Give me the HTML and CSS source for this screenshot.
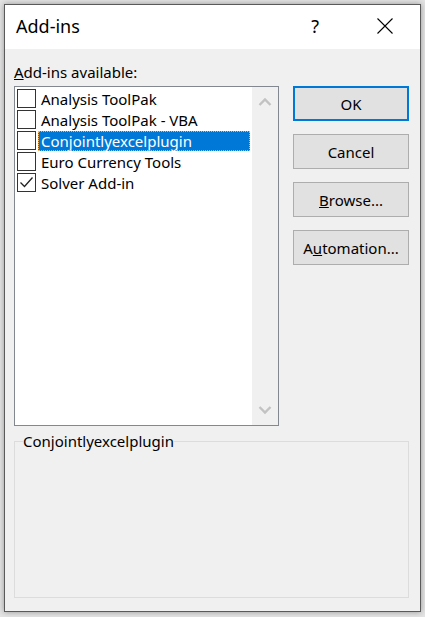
FILE: index.html
```html
<!DOCTYPE html>
<html>
<head>
<meta charset="utf-8">
<link rel="stylesheet" href="styles.css">
</head>
<body>
<div class="window">
  <div class="titlebar">
    <span class="title">Add-ins</span>
    <span class="help">?</span>
    <svg class="close" width="16" height="16" viewBox="0 0 16 16"><path d="M0.5 0.5 L15.5 15.5 M15.5 0.5 L0.5 15.5" stroke="#000" stroke-width="1.1" fill="none"/></svg>
  </div>
  <div class="content">
    <div class="main">
      <div class="left">
        <div class="label"><u>A</u>dd-ins available:</div>
        <div class="listbox">
          <div class="items">
            <div class="row"><span class="cb"></span><span class="txt">Analysis ToolPak</span></div>
            <div class="row"><span class="cb"></span><span class="txt">Analysis ToolPak - VBA</span></div>
            <div class="row"><span class="cb"></span><span class="txt sel">Conjointlyexcelplugin</span></div>
            <div class="row"><span class="cb"></span><span class="txt">Euro Currency Tools</span></div>
            <div class="row"><span class="cb"><svg width="17" height="17" viewBox="0 0 17 17"><path d="M2.5 8.5 L6.5 12.5 L14.5 3.5" stroke="#222" stroke-width="1.3" fill="none"/></svg></span><span class="txt">Solver Add-in</span></div>
          </div>
          <div class="scrollbar">
            <svg width="14" height="10" viewBox="0 0 14 10"><path d="M1.5 8 L7 2.5 L12.5 8" stroke="#c2c2c2" stroke-width="2.4" fill="none"/></svg>
            <svg width="14" height="10" viewBox="0 0 14 10"><path d="M1.5 2 L7 7.5 L12.5 2" stroke="#c2c2c2" stroke-width="2.4" fill="none"/></svg>
          </div>
        </div>
      </div>
      <div class="buttons">
        <button class="btn default">OK</button>
        <button class="btn">Cancel</button>
        <button class="btn"><u>B</u>rowse...</button>
        <button class="btn">A<u>u</u>tomation...</button>
      </div>
    </div>
    <fieldset class="group">
      <legend>Conjointlyexcelplugin</legend>
    </fieldset>
  </div>
</div>
</body>
</html>
```
FILE: styles.css
```css
html, body {
  margin: 0;
  padding: 0;
}
body {
  background: #e4e4e4;
  width: 425px;
  height: 617px;
  overflow: hidden;
  font-family: "Noto Sans", "Open Sans", sans-serif;
  font-size: 15px;
  color: #000;
}
.window {
  margin: 4px 0 0 4px;
  width: 415px;
  height: 606px;
  border: 1px solid #5a5a5a;
  background: #f0f0f0;
  box-shadow: 0 0 6px rgba(0,0,0,0.35);
  display: flex;
  flex-direction: column;
}
.titlebar {
  height: 44px;
  background: #fff;
  display: flex;
  align-items: center;
}
.title {
  margin-left: 11px;
  font-size: 18px;
  margin-top: -2px;
}
.help {
  margin-left: auto;
  font-size: 18px;
  margin-right: 58px;
  margin-top: -2px;
}
.close {
  margin-right: 27px;
  margin-top: -2px;
}
.content {
  flex: 1;
  padding: 0 11px 0 9px;
  display: flex;
  flex-direction: column;
}
.main {
  display: flex;
  gap: 14px;
}
.left {
  display: flex;
  flex-direction: column;
}
.label {
  height: 20px;
  line-height: 20px;
  margin-top: 13px;
  margin-bottom: 4px;
}
.listbox {
  width: 263px;
  height: 338px;
  border: 1px solid #828790;
  background: #fff;
  display: flex;
}
.items {
  flex: 1;
  padding-top: 1px;
}
.row {
  height: 21px;
  display: flex;
  align-items: center;
}
.cb {
  width: 19px;
  height: 19px;
  border: 1px solid #333;
  box-sizing: border-box;
  margin-left: 2px;
  margin-right: 2px;
  background: #fff;
  display: flex;
  align-items: center;
  justify-content: center;
}
.txt {
  padding: 0 3px;
  height: 20px;
  line-height: 20px;
  white-space: nowrap;
}
.txt.sel {
  background: #0078d7;
  color: #fff;
  width: 212px;
  box-sizing: border-box;
  outline: 1px dotted #f7b35a;
  outline-offset: -1px;
}
.scrollbar {
  width: 26px;
  background: #f0f0f0;
  display: flex;
  flex-direction: column;
  justify-content: space-between;
  align-items: center;
  padding: 10px 0 10px;
}
.buttons {
  display: flex;
  flex-direction: column;
  gap: 13px;
  margin-top: 37px;
}
.btn {
  width: 116px;
  height: 35px;
  background: #e1e1e1;
  border: 1px solid #adadad;
  font-family: inherit;
  font-size: 15px;
  color: #000;
  padding: 0;
  margin: 0;
}
.btn.default {
  border: 2px solid #0078d7;
}
.group {
  margin: 6px 0 0 0;
  border: 1px solid #dcdcdc;
  padding: 0;
  height: 166px;
  box-sizing: border-box;
}
.group legend {
  padding: 0;
  margin-left: 8px;
  font-size: 15px;
  line-height: 18px;
}
```
